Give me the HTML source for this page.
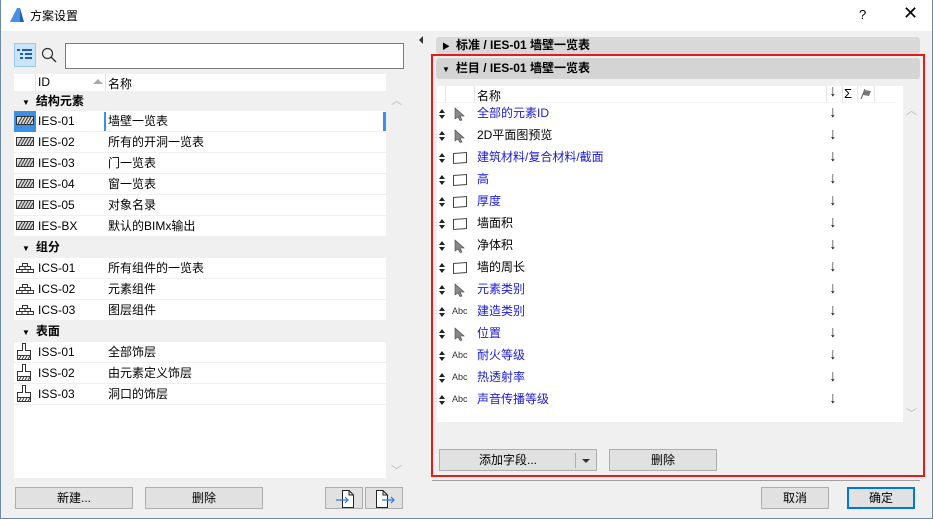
<!DOCTYPE html>
<html><head><meta charset="utf-8"><style>
*{box-sizing:border-box;margin:0;padding:0}
body{width:933px;height:519px;overflow:hidden;background:#f0f0f0;font-family:"Liberation Sans","Noto Sans CJK SC",sans-serif;font-size:12px;color:#000;position:relative}
.abs{position:absolute}
.win{position:absolute;left:0;top:0;width:933px;height:519px;border:1px solid #6b8aa6;border-top:none}
.title{position:absolute;left:0;top:0;width:933px;height:31px;background:#fff}
.btn{position:absolute;background:#e1e1e1;border:1px solid #adadad;text-align:center;line-height:20px;font-size:12px}
.row{position:absolute;left:14px;width:372px;height:21px;background:#fff;border-bottom:1px solid #f0f0f0;line-height:20px}
.grp{position:absolute;left:14px;width:372px;height:21px;background:#f0f0f0;line-height:21px;font-weight:bold}
.row .id{position:absolute;left:24px}
.row .nm{position:absolute;left:94px}
.row svg{position:absolute;left:2px;top:5px}
.r{position:absolute;left:437px;width:466px;height:22px;line-height:22px}
.r .t{position:absolute;left:40px}
.r .d{position:absolute;left:392px;font-size:16px;transform:scaleX(.8)}
.r .s{position:absolute;left:2px;top:7px}
.b{color:#1a1ad8}
.abc{position:absolute;left:15px;font-size:9px;color:#333}
</style></head><body>
<div class="title">
<svg class="abs" style="left:9px;top:7px" width="16" height="16"><path d="M1 15 L8 1 L11 1 L11 15Z" fill="#4a90e2"/><path d="M11 1 L15 15 L11 15Z" fill="#1d5fb0"/></svg>
<div class="abs" style="left:30px;top:7px;font-size:12px">方案设置</div>
<div class="abs" style="left:859px;top:7px;font-size:13px">?</div>
<div class="abs" style="left:903px;top:3px;font-size:18px">✕</div>
</div>
<div class="win"></div>
<div class="abs" style="left:14px;top:43px;width:22px;height:24px;background:#cce4f7;border:1px solid #99c9ef"></div>
<svg class="abs" style="left:17px;top:48px" width="16" height="14"><g fill="#1b5fa8"><rect x="0" y="1" width="3" height="2"/><rect x="5" y="1" width="10" height="2"/><rect x="3" y="5" width="3" height="2"/><rect x="8" y="5" width="7" height="2"/><rect x="3" y="9" width="3" height="2"/><rect x="8" y="9" width="7" height="2"/></g></svg>
<svg class="abs" style="left:41px;top:47px" width="16" height="16"><circle cx="6.5" cy="6.5" r="5" fill="none" stroke="#333" stroke-width="1.2"/><path d="M10 10 L15 15" stroke="#333" stroke-width="1.4"/></svg>
<div class="abs" style="left:65px;top:43px;width:339px;height:26px;background:#fff;border:1px solid #7a7a7a"></div>
<div class="abs" style="left:14px;top:74px;width:372px;height:18px;background:#fff"></div>
<div class="abs" style="left:35px;top:74px;width:1px;height:17px;background:#e5e5e5"></div>
<div class="abs" style="left:105px;top:74px;width:1px;height:17px;background:#e5e5e5"></div>
<div class="abs" style="left:38px;top:75px">ID</div>
<div class="abs" style="left:93px;top:79px;width:0;height:0;border-left:5px solid transparent;border-right:5px solid transparent;border-bottom:5px solid #aaa"></div>
<div class="abs" style="left:108px;top:75px">名称</div>
<div class="abs" style="left:14px;top:91px;width:388px;height:387px;background:#fff"></div>
<div class="abs" style="left:386px;top:91px;width:17px;height:387px;background:#f0f0f0"></div>
<div class="abs" style="left:391px;top:92px;color:#bbb;font-size:11px">︿</div>
<div class="abs" style="left:391px;top:462px;color:#bbb;font-size:11px">﹀</div>

<div class="grp" style="top:91px"><span style="font-size:8px;margin-left:8px;font-weight:normal">▼</span><span style="margin-left:6px">结构元素</span></div>
<div class="row" style="top:111px"><div class="abs" style="left:0;top:0;width:22px;height:21px;background:#3b8fe6"></div><svg width="18" height="9"><rect x=".5" y=".5" width="17" height="8" fill="#ddd" stroke="#333"/><path d="M2 8L6 1M5 8L9 1M8 8L12 1M11 8L15 1M14 8L17 3" stroke="#333"/></svg><span class="id">IES-01</span><div class="abs" style="left:90px;top:1px;width:2px;height:19px;background:#3b8fe6"></div><span class="nm">墙壁一览表</span><div class="abs" style="left:369px;top:1px;width:3px;height:19px;background:#3b8fe6"></div></div>
<div class="row" style="top:132px"><svg width="18" height="9"><rect x=".5" y=".5" width="17" height="8" fill="#ddd" stroke="#333"/><path d="M2 8L6 1M5 8L9 1M8 8L12 1M11 8L15 1M14 8L17 3" stroke="#333"/></svg><span class="id">IES-02</span><span class="nm">所有的开洞一览表</span></div>
<div class="row" style="top:153px"><svg width="18" height="9"><rect x=".5" y=".5" width="17" height="8" fill="#ddd" stroke="#333"/><path d="M2 8L6 1M5 8L9 1M8 8L12 1M11 8L15 1M14 8L17 3" stroke="#333"/></svg><span class="id">IES-03</span><span class="nm">门一览表</span></div>
<div class="row" style="top:174px"><svg width="18" height="9"><rect x=".5" y=".5" width="17" height="8" fill="#ddd" stroke="#333"/><path d="M2 8L6 1M5 8L9 1M8 8L12 1M11 8L15 1M14 8L17 3" stroke="#333"/></svg><span class="id">IES-04</span><span class="nm">窗一览表</span></div>
<div class="row" style="top:195px"><svg width="18" height="9"><rect x=".5" y=".5" width="17" height="8" fill="#ddd" stroke="#333"/><path d="M2 8L6 1M5 8L9 1M8 8L12 1M11 8L15 1M14 8L17 3" stroke="#333"/></svg><span class="id">IES-05</span><span class="nm">对象名录</span></div>
<div class="row" style="top:216px"><svg width="18" height="9"><rect x=".5" y=".5" width="17" height="8" fill="#ddd" stroke="#333"/><path d="M2 8L6 1M5 8L9 1M8 8L12 1M11 8L15 1M14 8L17 3" stroke="#333"/></svg><span class="id">IES-BX</span><span class="nm">默认的BIMx输出</span></div>

<div class="grp" style="top:237px"><span style="font-size:8px;margin-left:8px;font-weight:normal">▼</span><span style="margin-left:6px">组分</span></div>
<div class="row" style="top:258px"><svg width="18" height="10"><path d="M.5 9.5H17.5V6.5H.5ZM3.5 6.5V3.5H14.5V6.5M6.5 3.5V.5H11.5V3.5M6 6.5V9.5M12 6.5V9.5M9 3.5V6.5" fill="none" stroke="#333"/></svg><span class="id">ICS-01</span><span class="nm">所有组件的一览表</span></div>
<div class="row" style="top:279px"><svg width="18" height="10"><path d="M.5 9.5H17.5V6.5H.5ZM3.5 6.5V3.5H14.5V6.5M6.5 3.5V.5H11.5V3.5M6 6.5V9.5M12 6.5V9.5M9 3.5V6.5" fill="none" stroke="#333"/></svg><span class="id">ICS-02</span><span class="nm">元素组件</span></div>
<div class="row" style="top:300px"><svg width="18" height="10"><path d="M.5 9.5H17.5V6.5H.5ZM3.5 6.5V3.5H14.5V6.5M6.5 3.5V.5H11.5V3.5M6 6.5V9.5M12 6.5V9.5M9 3.5V6.5" fill="none" stroke="#333"/></svg><span class="id">ICS-03</span><span class="nm">图层组件</span></div>

<div class="grp" style="top:321px"><span style="font-size:8px;margin-left:8px;font-weight:normal">▼</span><span style="margin-left:6px">表面</span></div>
<div class="row" style="top:342px"><svg style="top:1px" width="16" height="18"><path d="M6.5 .5H9.5V7.5H14.5V12.5H1.5V7.5H6.5ZM1.5 12.5V16.5H14.5V12.5M3 16L5 13M6 16L8 13M9 16L11 13M12 16L14 13" fill="none" stroke="#333"/></svg><span class="id">ISS-01</span><span class="nm">全部饰层</span></div>
<div class="row" style="top:363px"><svg style="top:1px" width="16" height="18"><path d="M6.5 .5H9.5V7.5H14.5V12.5H1.5V7.5H6.5ZM1.5 12.5V16.5H14.5V12.5M3 16L5 13M6 16L8 13M9 16L11 13M12 16L14 13" fill="none" stroke="#333"/></svg><span class="id">ISS-02</span><span class="nm">由元素定义饰层</span></div>
<div class="row" style="top:384px"><svg style="top:1px" width="16" height="18"><path d="M6.5 .5H9.5V7.5H14.5V12.5H1.5V7.5H6.5ZM1.5 12.5V16.5H14.5V12.5M3 16L5 13M6 16L8 13M9 16L11 13M12 16L14 13" fill="none" stroke="#333"/></svg><span class="id">ISS-03</span><span class="nm">洞口的饰层</span></div>

<div class="btn" style="left:15px;top:487px;width:118px;height:22px">新建...</div>
<div class="btn" style="left:145px;top:487px;width:118px;height:22px">删除</div>
<div class="btn" style="left:325px;top:487px;width:38px;height:22px"><svg class="abs" style="left:8px;top:2px" width="22" height="18"><path d="M8.5 .5H15L19.5 5V17.5H8.5Z M15 .5V5H19.5" fill="#fff" stroke="#222"/><path d="M2 10H14M11 7L14 10L11 13" fill="none" stroke="#2a7ae2" stroke-width="1.2"/></svg></div>
<div class="btn" style="left:365px;top:487px;width:38px;height:22px"><svg class="abs" style="left:8px;top:2px" width="22" height="18"><path d="M2.5 .5H9L13.5 5V17.5H2.5Z M9 .5V5H13.5" fill="#fff" stroke="#222"/><path d="M8 10H20M17 7L20 10L17 13" fill="none" stroke="#2a7ae2" stroke-width="1.2"/></svg></div>

<div class="abs" style="left:419px;top:36px;width:0;height:0;border-top:4px solid transparent;border-bottom:4px solid transparent;border-right:4px solid #333"></div>

<div class="abs" style="left:436px;top:37px;width:484px;height:17px;background:#d9d9d9;border-radius:3px;font-weight:bold;line-height:17px"><span style="font-size:8px;margin-left:6px;font-weight:normal">▶</span><span style="margin-left:6px">标准 / IES-01 墙壁一览表</span></div>
<div class="abs" style="left:431px;top:54px;width:494px;height:423px;border:2px solid #e31b1b"></div>
<div class="abs" style="left:436px;top:58px;width:484px;height:21px;background:#d4d4d4;border-radius:3px;font-weight:bold;line-height:21px"><span style="font-size:8px;margin-left:6px;font-weight:normal">▼</span><span style="margin-left:6px">栏目 / IES-01 墙壁一览表</span></div>
<div class="abs" style="left:437px;top:86px;width:466px;height:336px;background:#fff"></div>
<div class="abs" style="left:903px;top:86px;width:17px;height:336px;background:#f0f0f0"></div>
<div class="abs" style="left:906px;top:102px;color:#bbb;font-size:11px">︿</div>
<div class="abs" style="left:906px;top:405px;color:#bbb;font-size:11px">﹀</div>
<div class="abs" style="left:437px;top:86px;width:460px;height:17px;background:#fff;border-bottom:1px solid #f5f5f5"></div>
<div class="abs" style="left:445px;top:86px;width:1px;height:16px;background:#e5e5e5"></div>
<div class="abs" style="left:474px;top:86px;width:1px;height:16px;background:#e5e5e5"></div>
<div class="abs" style="left:826px;top:86px;width:1px;height:16px;background:#e5e5e5"></div>
<div class="abs" style="left:842px;top:86px;width:1px;height:16px;background:#e5e5e5"></div>
<div class="abs" style="left:857px;top:86px;width:1px;height:16px;background:#e5e5e5"></div>
<div class="abs" style="left:874px;top:86px;width:1px;height:16px;background:#e5e5e5"></div>
<div class="abs" style="left:477px;top:87px">名称</div>
<div class="abs" style="left:829px;top:83px;font-size:16px;transform:scaleX(.8)">↓</div>
<div class="abs" style="left:844px;top:86px;font-size:13px">Σ</div>
<svg class="abs" style="left:860px;top:88px" width="12" height="12"><path d="M1 11L5 1" stroke="#555"/><path d="M4 2L11 3L9 8L3 7Z" fill="#777"/></svg>

<svg width="0" height="0" style="position:absolute"><defs><g id="ud"><path d="M0 4L3 0L6 4Z M0 6L3 10L6 6Z" fill="#222"/></g></defs></svg>

<div class="r" style="top:102px"><svg class="s" width="6" height="10"><use href="#ud"/></svg><svg class="abs" style="left:17px;top:5px" width="11" height="14"><path d="M1 1L10 9H6L8 13L6 13.5L4 10L1 12Z" fill="#888" stroke="#444" stroke-width=".6"/></svg><span class="t b">全部的元素ID</span><span class="d">↓</span></div>
<div class="r" style="top:124px"><svg class="s" width="6" height="10"><use href="#ud"/></svg><svg class="abs" style="left:17px;top:5px" width="11" height="14"><path d="M1 1L10 9H6L8 13L6 13.5L4 10L1 12Z" fill="#888" stroke="#444" stroke-width=".6"/></svg><span class="t">2D平面图预览</span><span class="d">↓</span></div>
<div class="r" style="top:146px"><svg class="s" width="6" height="10"><use href="#ud"/></svg><svg class="abs" style="left:15px;top:5px" width="16" height="14"><path d="M1.5 2.5L14.5 1.5V11.5L1.5 12.5Z" fill="#fff" stroke="#444"/></svg><span class="t b">建筑材料/复合材料/截面</span><span class="d">↓</span></div>
<div class="r" style="top:168px"><svg class="s" width="6" height="10"><use href="#ud"/></svg><svg class="abs" style="left:15px;top:5px" width="16" height="14"><path d="M1.5 2.5L14.5 1.5V11.5L1.5 12.5Z" fill="#fff" stroke="#444"/></svg><span class="t b">高</span><span class="d">↓</span></div>
<div class="r" style="top:190px"><svg class="s" width="6" height="10"><use href="#ud"/></svg><svg class="abs" style="left:15px;top:5px" width="16" height="14"><path d="M1.5 2.5L14.5 1.5V11.5L1.5 12.5Z" fill="#fff" stroke="#444"/></svg><span class="t b">厚度</span><span class="d">↓</span></div>
<div class="r" style="top:212px"><svg class="s" width="6" height="10"><use href="#ud"/></svg><svg class="abs" style="left:15px;top:5px" width="16" height="14"><path d="M1.5 2.5L14.5 1.5V11.5L1.5 12.5Z" fill="#fff" stroke="#444"/></svg><span class="t">墙面积</span><span class="d">↓</span></div>
<div class="r" style="top:234px"><svg class="s" width="6" height="10"><use href="#ud"/></svg><svg class="abs" style="left:17px;top:5px" width="11" height="14"><path d="M1 1L10 9H6L8 13L6 13.5L4 10L1 12Z" fill="#888" stroke="#444" stroke-width=".6"/></svg><span class="t">净体积</span><span class="d">↓</span></div>
<div class="r" style="top:256px"><svg class="s" width="6" height="10"><use href="#ud"/></svg><svg class="abs" style="left:15px;top:5px" width="16" height="14"><path d="M1.5 2.5L14.5 1.5V11.5L1.5 12.5Z" fill="#fff" stroke="#444"/></svg><span class="t">墙的周长</span><span class="d">↓</span></div>
<div class="r" style="top:278px"><svg class="s" width="6" height="10"><use href="#ud"/></svg><svg class="abs" style="left:17px;top:5px" width="11" height="14"><path d="M1 1L10 9H6L8 13L6 13.5L4 10L1 12Z" fill="#888" stroke="#444" stroke-width=".6"/></svg><span class="t b">元素类别</span><span class="d">↓</span></div>
<div class="r" style="top:300px"><svg class="s" width="6" height="10"><use href="#ud"/></svg><span class="abc">Abc</span><span class="t b">建造类别</span><span class="d">↓</span></div>
<div class="r" style="top:322px"><svg class="s" width="6" height="10"><use href="#ud"/></svg><svg class="abs" style="left:17px;top:5px" width="11" height="14"><path d="M1 1L10 9H6L8 13L6 13.5L4 10L1 12Z" fill="#888" stroke="#444" stroke-width=".6"/></svg><span class="t b">位置</span><span class="d">↓</span></div>
<div class="r" style="top:344px"><svg class="s" width="6" height="10"><use href="#ud"/></svg><span class="abc">Abc</span><span class="t b">耐火等级</span><span class="d">↓</span></div>
<div class="r" style="top:366px"><svg class="s" width="6" height="10"><use href="#ud"/></svg><span class="abc">Abc</span><span class="t b">热透射率</span><span class="d">↓</span></div>
<div class="r" style="top:388px"><svg class="s" width="6" height="10"><use href="#ud"/></svg><span class="abc">Abc</span><span class="t b">声音传播等级</span><span class="d">↓</span></div>

<div class="btn" style="left:439px;top:449px;width:158px;height:22px;text-align:left;padding-left:39px">添加字段...<div class="abs" style="left:135px;top:3px;width:1px;height:15px;background:#adadad"></div><div class="abs" style="left:142px;top:9px;border-left:4px solid transparent;border-right:4px solid transparent;border-top:4px solid #333"></div></div>
<div class="btn" style="left:609px;top:449px;width:108px;height:22px">删除</div>
<div class="abs" style="left:432px;top:480px;width:488px;height:1px;background:#a0a0a0"></div>
<div class="btn" style="left:761px;top:487px;width:68px;height:22px">取消</div>
<div class="btn" style="left:847px;top:487px;width:68px;height:22px;border:2px solid #0078d7;line-height:18px">确定</div>
</body></html>
